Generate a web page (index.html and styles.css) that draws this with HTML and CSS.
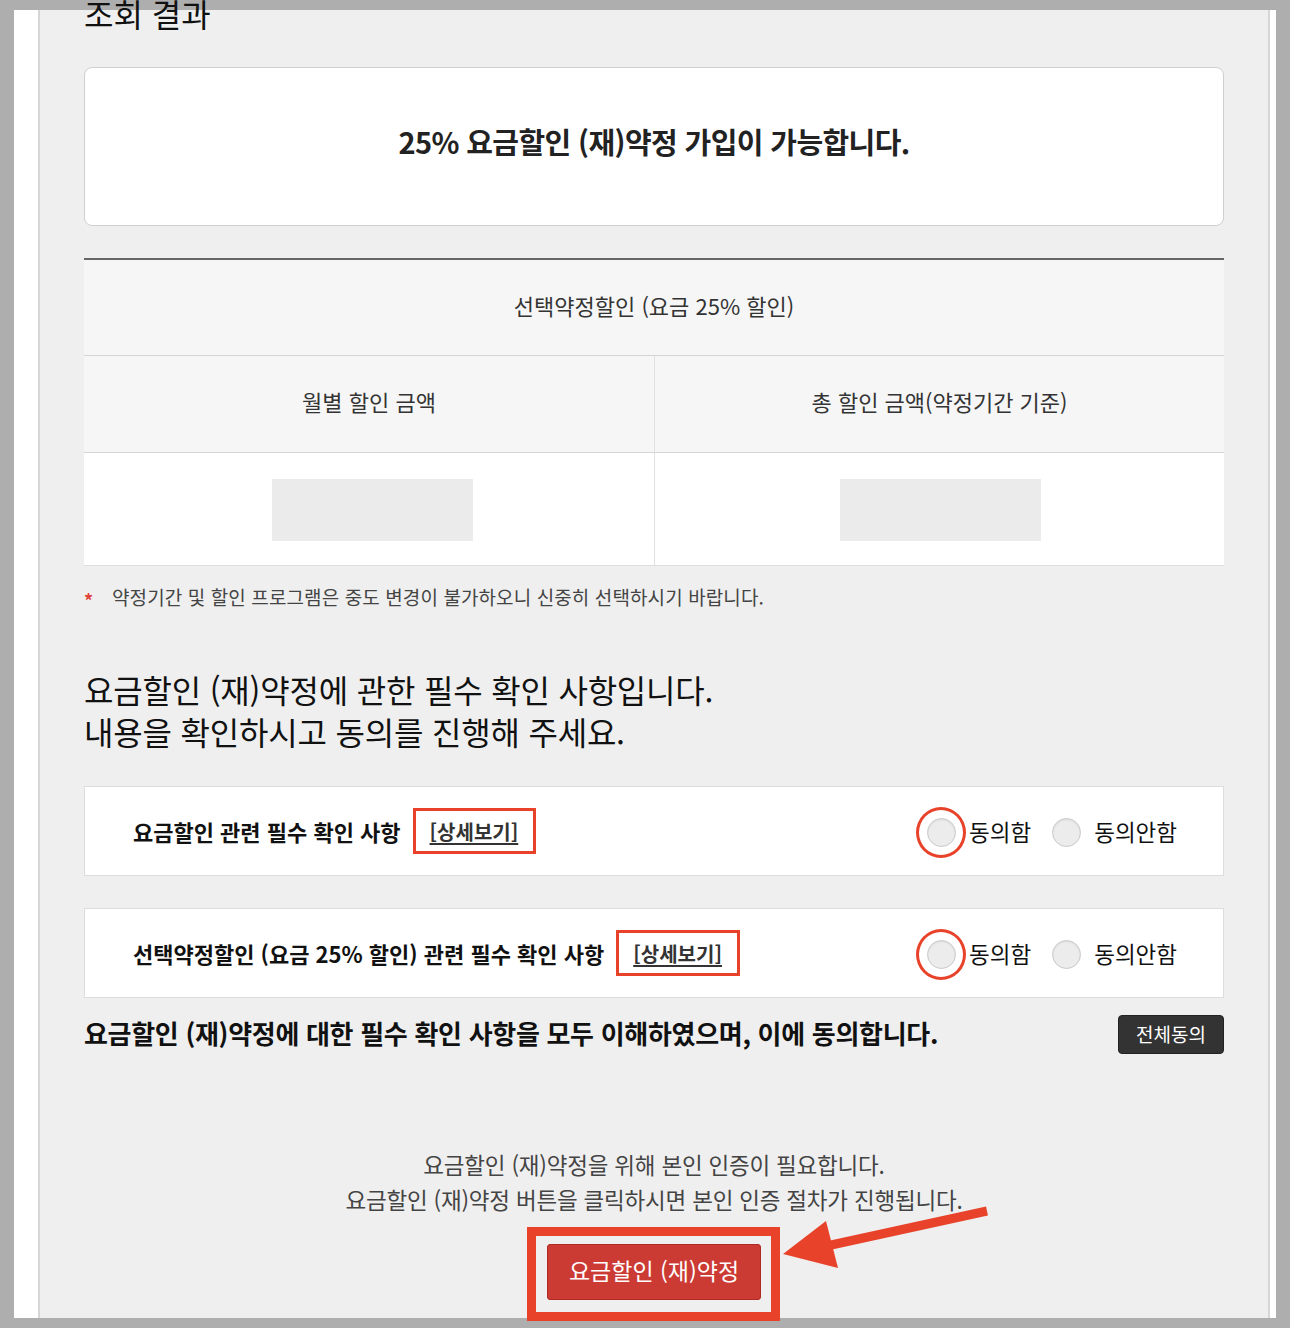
FILE: index.html
```html
<!DOCTYPE html>
<html lang="ko">
<head>
<meta charset="utf-8">
<title>조회 결과</title>
<link rel="stylesheet" href="styles.css">
</head>
<body>
<div class="frame">
  <main class="panel">
    <h2 class="title">조회 결과</h2>

    <div class="result-box">
      <p class="result-text">25% 요금할인 (재)약정 가입이 가능합니다.</p>
    </div>

    <div class="table">
      <div class="cell head full">선택약정할인 (요금 25% 할인)</div>
      <div class="cell head">월별 할인 금액</div>
      <div class="cell head right">총 할인 금액(약정기간 기준)</div>
      <div class="cell value"><span class="placeholder"></span></div>
      <div class="cell value right"><span class="placeholder"></span></div>
    </div>

    <p class="note"><span class="star">*</span>약정기간 및 할인 프로그램은 중도 변경이 불가하오니 신중히 선택하시기 바랍니다.</p>

    <h3 class="section-title">요금할인 (재)약정에 관한 필수 확인 사항입니다.<br>내용을 확인하시고 동의를 진행해 주세요.</h3>

    <div class="agree-box">
      <div class="agree-label">
        <strong>요금할인 관련 필수 확인 사항</strong>
        <span class="mark-box"><a class="detail" href="#">[상세보기]</a></span>
      </div>
      <div class="choices">
        <label class="choice"><span class="radio"><span class="ring"></span></span><span class="choice-text">동의함</span></label>
        <label class="choice"><span class="radio"></span><span class="choice-text">동의안함</span></label>
      </div>
    </div>

    <div class="agree-box second">
      <div class="agree-label">
        <strong>선택약정할인 (요금 25% 할인) 관련 필수 확인 사항</strong>
        <span class="mark-box"><a class="detail" href="#">[상세보기]</a></span>
      </div>
      <div class="choices">
        <label class="choice"><span class="radio"><span class="ring"></span></span><span class="choice-text">동의함</span></label>
        <label class="choice"><span class="radio"></span><span class="choice-text">동의안함</span></label>
      </div>
    </div>

    <div class="all-agree">
      <p class="all-text">요금할인 (재)약정에 대한 필수 확인 사항을 모두 이해하였으며, 이에 동의합니다.</p>
      <button class="all-btn" type="button">전체동의</button>
    </div>

    <p class="guide">요금할인 (재)약정을 위해 본인 인증이 필요합니다.<br>요금할인 (재)약정 버튼을 클릭하시면 본인 인증 절차가 진행됩니다.</p>

    <div class="submit-wrap">
      <span class="submit-mark"><button class="submit" type="button">요금할인 (재)약정</button></span>
    </div>
  </main>
</div>

<svg class="arrow" width="1290" height="1328" viewBox="0 0 1290 1328">
  <line x1="987" y1="1211" x2="822" y2="1247" stroke="#e8432a" stroke-width="9"/>
  <polygon points="783,1254 826,1221 838,1268" fill="#e8432a"/>
</svg>
</body>
</html>
```

FILE: styles.css
```css
* { box-sizing: border-box; }

html, body {
  margin: 0;
  padding: 0;
}

body {
  width: 1290px;
  height: 1328px;
  background: #aeaeae;
  font-family: "Noto Sans CJK KR", "Noto Sans", sans-serif;
  color: #222;
  position: relative;
  overflow: hidden;
}

.frame {
  margin: 10px 14px 0 14px;
  height: 1308px;
  background: #ffffff;
  padding: 0 6px 0 24px;
}

.panel {
  height: 100%;
  background: #efefef;
  border-left: 2px solid #d6d6d6;
  border-right: 2px solid #d6d6d6;
  padding: 0 44px;
  display: flex;
  flex-direction: column;
}

.panel > * {
  flex-shrink: 0;
}

.title {
  margin: -17px 0 0 0;
  font-size: 32px;
  line-height: 40px;
  font-weight: 400;
  color: #111;
  position: relative;
}

.result-box {
  margin-top: 34px;
  height: 159px;
  background: #fff;
  border: 1px solid #cfcfcf;
  border-radius: 8px;
  display: flex;
  align-items: center;
  justify-content: center;
}

.result-text {
  margin: 0;
  font-size: 29px;
  font-weight: 700;
  letter-spacing: -0.6px;
  color: #222;
  position: relative;
  top: -6px;
}

.table {
  margin-top: 32px;
  border-top: 2px solid #666;
  display: grid;
  grid-template-columns: 570px 1fr;
}

.cell {
  display: flex;
  align-items: center;
  justify-content: center;
  font-size: 22px;
  color: #333;
}

.head {
  background: #f6f6f6;
  height: 97px;
  border-bottom: 1px solid #d4d4d4;
  padding-bottom: 6px;
}

.head.full {
  grid-column: 1 / 3;
  height: 96px;
}

.right {
  border-left: 1px solid #e0e0e0;
}

.value {
  background: #fff;
  height: 113px;
  border-bottom: 1px solid #dedede;
}

.value .placeholder {
  display: block;
  width: 201px;
  height: 62px;
  background: #ebebeb;
  margin-top: 1px;
  margin-left: 6px;
}

.value.right .placeholder {
  margin-left: 2px;
}

.note {
  margin: 18px 0 0 0;
  font-size: 19px;
  line-height: 26px;
  color: #444;
  letter-spacing: 0.1px;
  display: flex;
  align-items: center;
}

.star {
  color: #e0443a;
  font-weight: 700;
  width: 28px;
  font-size: 18px;
  line-height: 26px;
  position: relative;
  top: 3px;
}

.section-title {
  margin: 58px 0 0 0;
  font-size: 32px;
  line-height: 42px;
  font-weight: 400;
  color: #111;
  letter-spacing: -0.2px;
}

.agree-box {
  margin-top: 34px;
  height: 90px;
  background: #fff;
  border: 1px solid #dcdcdc;
  display: flex;
  align-items: center;
  justify-content: space-between;
  padding: 0 46px 0 48px;
}

.agree-box.second {
  margin-top: 32px;
}

.agree-label {
  display: flex;
  align-items: center;
}

.agree-label strong {
  font-size: 22px;
  font-weight: 700;
  letter-spacing: 0;
  color: #111;
}

.mark-box {
  margin-left: 12px;
  border: 3px solid #e8432a;
  padding: 5px 15px 5px 14px;
  height: 46px;
  display: flex;
  align-items: center;
}

.detail {
  font-size: 20px;
  font-weight: 700;
  color: #333;
  text-decoration: underline;
  text-underline-offset: 3px;
  letter-spacing: 0;
}

.choices {
  display: flex;
  align-items: center;
  gap: 21px;
}

.choice {
  display: flex;
  align-items: center;
  font-size: 22.5px;
  color: #111;
}

.radio {
  position: relative;
  width: 29px;
  height: 29px;
  border-radius: 50%;
  background: #ececec;
  border: 1px solid #cacaca;
  box-shadow: inset 0 1px 2px rgba(0,0,0,0.08);
  margin-top: 3px;
}

.ring {
  position: absolute;
  left: -12px;
  top: -12px;
  width: 50px;
  height: 51px;
  border: 3.5px solid #e8432a;
  border-radius: 50%;
}

.choice-text {
  margin-left: 13px;
}

.all-agree {
  margin-top: 17px;
  display: flex;
  align-items: center;
  justify-content: space-between;
}

.all-text {
  margin: 0;
  font-size: 26px;
  font-weight: 700;
  letter-spacing: -0.3px;
  color: #111;
  position: relative;
  top: -2px;
}

.all-btn {
  width: 106px;
  height: 39px;
  background: #333;
  color: #fff;
  border: 1px solid #222;
  border-radius: 4px;
  font-family: inherit;
  font-size: 19px;
  padding: 0 0 2px 0;
}

.guide {
  margin: 93px 0 0 0;
  text-align: center;
  font-size: 22.5px;
  line-height: 35px;
  color: #444;
  letter-spacing: -0.2px;
}

.submit-wrap {
  margin-top: 10px;
  display: flex;
  justify-content: center;
}

.submit-mark {
  display: block;
  border: 9px solid #e8432a;
  padding: 8px 10px 12px 11px;
  margin-left: -1px;
  position: relative;
  z-index: 2;
}

.submit {
  display: block;
  width: 214px;
  height: 56px;
  background: #cc3a34;
  border: 1px solid #b02a25;
  border-radius: 3px;
  color: #fff;
  font-family: inherit;
  font-size: 23px;
  padding: 0 0 5px 0;
}

.arrow {
  position: absolute;
  left: 0;
  top: 0;
  pointer-events: none;
  z-index: 3;
}
```
